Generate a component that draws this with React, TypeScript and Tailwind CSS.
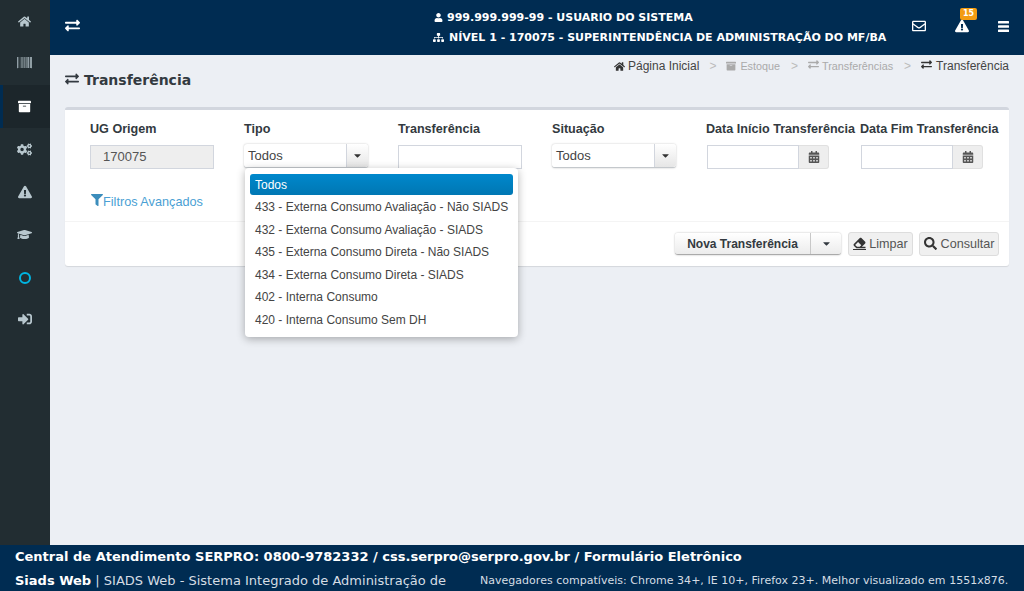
import React from "react";
import {
  FaArchive,
  FaBarcode,
  FaCalendarAlt,
  FaCaretDown,
  FaCogs,
  FaEraser,
  FaExchangeAlt,
  FaExclamationTriangle,
  FaFilter,
  FaGraduationCap,
  FaHome,
  FaRegEnvelope,
  FaSearch,
  FaSignInAlt,
  FaSitemap,
  FaUser,
} from "react-icons/fa";

const sideItems = [
  { icon: <FaHome size={13} />, h: "h-[42px]" },
  { icon: <FaBarcode size={15} className="-mt-[3px]" />, h: "h-[43px]" },
  { icon: <FaArchive size={13} className="text-white" />, h: "h-[43px]", active: true },
  { icon: <FaCogs size={15} />, h: "h-[43px]" },
  { icon: <FaExclamationTriangle size={14} />, h: "h-[42px]" },
  { icon: <FaGraduationCap size={15} />, h: "h-[42px]" },
  {
    icon: <span className="mt-[3px] block size-[12px] rounded-full border-2 border-[#00b5e2]" />,
    h: "h-[43px]",
  },
  { icon: <FaSignInAlt size={14} />, h: "h-[42px]" },
];

const options = [
  "433 - Externa Consumo Avaliação - Não SIADS",
  "432 - Externa Consumo Avaliação - SIADS",
  "435 - Externa Consumo Direta - Não SIADS",
  "434 - Externa Consumo Direta - SIADS",
  "402 - Interna Consumo",
  "420 - Interna Consumo Sem DH",
];

const Label = ({ children }: { children: React.ReactNode }) => (
  <div className="h-[16px] text-[12.6px] leading-[16px] font-bold whitespace-nowrap text-[#333a40]">{children}</div>
);

const Select = () => (
  <div className="mt-[7px] flex h-[24px] w-[124px] rounded-[3px] border-b border-[#c4c8cc] bg-white shadow-[0_0_2px_rgba(0,0,0,0.25)]">
    <div className="flex-1 pl-[4px] text-[13px] leading-[24px] text-[#444]">Todos</div>
    <div className="flex w-[22px] items-center justify-center rounded-r-[3px] border-l border-[#d2d6de] bg-gradient-to-b from-white to-[#e6e6e6] text-[#333]">
      <FaCaretDown size={11} />
    </div>
  </div>
);

const DateInput = () => (
  <div className="mt-[8px] ml-px flex h-[24px] w-[122px]">
    <div className="flex-1 border border-[#d2d6de] bg-white" />
    <div className="flex w-[30px] items-center justify-center rounded-r-[3px] border-y border-r border-[#e0e0e0] bg-[#eeeeee] text-[#555]">
      <FaCalendarAlt size={12} />
    </div>
  </div>
);

const App: React.FC = () => {
  return (
    <div className="flex h-screen flex-col overflow-hidden bg-[#eceff4] font-['Liberation_Sans',Arial,sans-serif]">
      <div className="flex min-h-0 flex-1">
        <aside className="w-[50px] shrink-0 bg-[#222d32] text-[#b8c7ce]">
          {sideItems.map((item, i) => (
            <div
              key={i}
              className={`flex items-center justify-center ${item.h} ${item.active ? "border-l-[3px] border-[#002c52] bg-[#1c262b] pr-[4px]" : "pr-px"}`}
            >
              {item.icon}
            </div>
          ))}
        </aside>

        <div className="flex min-w-0 flex-1 flex-col">
          <header className="flex h-[55px] shrink-0 items-center bg-[#002c52] font-['DejaVu_Sans',sans-serif] text-white">
            <div className="-mt-[4px] ml-[15px] w-[368px]">
              <FaExchangeAlt size={15} />
            </div>
            <div className="w-[464px] text-[11px] leading-[20px] font-bold whitespace-nowrap">
              <div className="flex items-center gap-[4px]">
                <FaUser size={9} className="ml-px shrink-0" /> 999.999.999-99 - USUARIO DO SISTEMA
              </div>
              <div className="flex items-center gap-[5px]">
                <FaSitemap size={11} className="shrink-0" /> NÍVEL 1 - 170075 - SUPERINTENDÊNCIA DE ADMINISTRAÇÃO DO MF/BA
              </div>
            </div>
            <div className="-mt-[3px] ml-[15px] flex items-center">
              <FaRegEnvelope size={14} />
              <div className="relative ml-[29px]">
                <FaExclamationTriangle size={14} />
                <span className="absolute top-[-11px] left-[5px] h-[12px] rounded-[2px] bg-[#f39c12] px-[3px] text-[8px] leading-[12px] font-bold">
                  15
                </span>
              </div>
              <svg width="11" height="11" viewBox="0 0 11 11" className="ml-[29px] fill-white">
                <rect y="0" width="11" height="2.5" rx="0.5" />
                <rect y="4.2" width="11" height="2.5" rx="0.5" />
                <rect y="8.4" width="11" height="2.5" rx="0.5" />
              </svg>
            </div>
          </header>

          <main className="relative min-h-0 flex-1 px-[15px] text-[#444]">
            <div className="flex h-[52px] items-start justify-between">
              <h1 className="mt-[16px] flex items-center gap-[5px] font-['DejaVu_Sans',sans-serif] text-[14px] leading-[18px] font-bold text-[#333a40]">
                <FaExchangeAlt size={14} className="-mt-[3px]" /> Transferência
              </h1>
              <nav className="mt-[3px] flex items-center text-[12px] leading-[16px] whitespace-nowrap">
                <FaHome size={11} className="mr-[3px] text-[#333]" />
                <span>Página Inicial</span>
                <span className="mx-[10px] text-[#bbb]">&gt;</span>
                <FaArchive size={10} className="mr-[4px] text-[#aaa]" />
                <span className="text-[10.8px] text-[#aaa]">Estoque</span>
                <span className="mx-[10px] ml-[11px] text-[#bbb]">&gt;</span>
                <FaExchangeAlt size={11} className="mr-[3px] -mt-[3px] text-[#aaa]" />
                <span className="text-[10.8px] text-[#aaa]">Transferências</span>
                <span className="mr-[10px] ml-[11px] text-[#bbb]">&gt;</span>
                <FaExchangeAlt size={11} className="mr-[4px] -mt-[3px] text-[#333]" />
                <span>Transferência</span>
              </nav>
            </div>

            <section className="rounded-[3px] border-t-[3px] border-[#d2d6de] bg-white shadow-[0_1px_1px_rgba(0,0,0,0.1)]">
              <div className="h-[112px] border-b border-[#f4f4f4] pt-[11px] pl-[25px]">
                <div className="grid grid-cols-[repeat(6,154px)]">
                  <div>
                    <Label>UG Origem</Label>
                    <div className="mt-[8px] h-[24px] w-[124px] border border-[#d2d6de] bg-[#eeeeee] pl-[12px] text-[13px] leading-[22px] text-[#555]">
                      170075
                    </div>
                  </div>
                  <div>
                    <Label>Tipo</Label>
                    <Select />
                  </div>
                  <div>
                    <Label>Transferência</Label>
                    <div className="mt-[8px] h-[24px] w-[124px] border border-[#d2d6de] bg-white" />
                  </div>
                  <div>
                    <Label>Situação</Label>
                    <Select />
                  </div>
                  <div>
                    <Label>Data Início Transferência</Label>
                    <DateInput />
                  </div>
                  <div>
                    <Label>Data Fim Transferência</Label>
                    <DateInput />
                  </div>
                </div>
                <div className="mt-[25px] flex items-center text-[12.7px] leading-[16px] text-[#4a9fd4]">
                  <FaFilter size={12} className="mt-[-5px] ml-px text-[#3c8dbc]" />
                  Filtros Avançados
                </div>
              </div>

              <div className="flex h-[44px] items-center justify-end gap-[6px] pr-[10px] text-[12.6px] text-[#555]">
                <div className="mr-px flex h-[22px] rounded-[3px] border-b border-[#aaa] bg-gradient-to-b from-white to-[#ececec] text-[12px] font-bold text-[#333a40] shadow-[0_0_2px_rgba(0,0,0,0.3)]">
                  <span className="flex w-[135px] items-center justify-center">Nova Transferência</span>
                  <span className="flex w-[31px] items-center justify-center border-l border-[#c8c8c8]">
                    <FaCaretDown size={11} />
                  </span>
                </div>
                <div className="flex h-[24px] w-[65px] items-center justify-center gap-[3px] rounded-[3px] border border-[#ddd] bg-[#f0f0f0] pt-px">
                  <FaEraser size={13} className="-mt-[3px] border-b border-[#333] text-[#333]" /> Limpar
                </div>
                <div className="flex h-[24px] w-[80px] items-center justify-center gap-[4px] rounded-[3px] border border-[#ddd] bg-[#f0f0f0] pt-px">
                  <FaSearch size={13} className="-mt-[3px] text-[#333]" /> Consultar
                </div>
              </div>
            </section>

            <div className="absolute top-[113px] left-[195px] h-[169px] w-[273px] rounded-[4px] bg-white px-[5px] pt-[6px] text-[12px] text-[#444] shadow-[0_2px_8px_rgba(0,0,0,0.3)]">
              <div className="mb-px h-[21px] rounded-[3px] bg-gradient-to-b from-[#0088cc] to-[#0077b3] pl-[5px] leading-[22px] text-white">
                Todos
              </div>
              {options.map((o) => (
                <div key={o} className="h-[22.6px] pl-[5px] leading-[22.6px] whitespace-nowrap">
                  {o}
                </div>
              ))}
            </div>
          </main>
        </div>
      </div>

      <footer className="h-[46px] shrink-0 bg-[#002c52] pl-[15px] font-['DejaVu_Sans',sans-serif] text-white">
        <div className="pt-[3px] text-[13px] leading-[17px] font-bold">
          Central de Atendimento SERPRO: 0800-9782332 / css.serpro@serpro.gov.br / Formulário Eletrônico
        </div>
        <div className="mt-[7px] flex whitespace-nowrap">
          <span className="w-[465px] text-[13px] leading-[17px] text-[#d5dde4]">
            <b className="text-white">Siads Web</b> | SIADS Web - Sistema Integrado de Administração de
          </span>
          <span className="text-[11px] leading-[17px] tracking-[0.02px] text-[#d5dde4]">
            Navegadores compatíveis: Chrome 34+, IE 10+, Firefox 23+. Melhor visualizado em 1551x876.
          </span>
        </div>
      </footer>
    </div>
  );
};

export default App;
